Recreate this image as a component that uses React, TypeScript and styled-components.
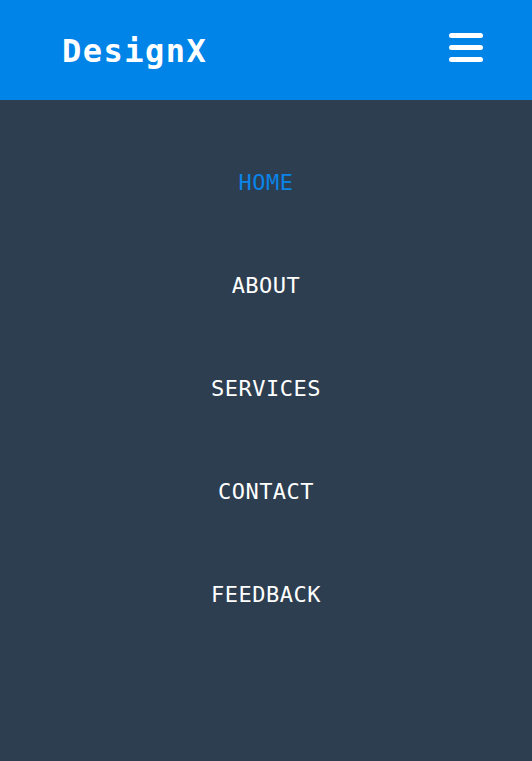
import React from "react";
import styled, { createGlobalStyle } from "styled-components";

const Global = createGlobalStyle`
  html, body { margin: 0; padding: 0; background: #2c3e50; }
  body { font-family: "DejaVu Sans Mono", monospace; }
`;

const Page = styled.div`
  width: 532px;
  height: 761px;
  background: #2c3e50;
  display: flex;
  flex-direction: column;
`;

const Header = styled.header`
  height: 100px;
  background: #0084e8;
  display: flex;
  align-items: center;
  justify-content: space-between;
  padding: 0 49px 0 62px;
  box-sizing: border-box;
`;

const Logo = styled.div`
  color: #ffffff;
  font-size: 32px;
  font-weight: bold;
  letter-spacing: 1.5px;
  padding-top: 2px;
`;

const Burger = styled.button`
  width: 34px;
  height: 29px;
  padding: 0;
  border: none;
  background: transparent;
  display: flex;
  flex-direction: column;
  justify-content: space-between;
  cursor: pointer;
  margin-top: -5px;
`;

const Bar = styled.span`
  display: block;
  height: 5px;
  border-radius: 3px;
  background: #ffffff;
`;

const Nav = styled.nav`
  display: flex;
  flex-direction: column;
  align-items: center;
  padding-top: 62px;
`;

const NavLink = styled.a<{ $active?: boolean }>`
  display: block;
  height: 103px;
  line-height: 42px;
  font-size: 22px;
  letter-spacing: 0.5px;
  color: ${(p) => (p.$active ? "#0a84e8" : "#ffffff")};
  text-decoration: none;
  text-transform: uppercase;
`;

const links = ["Home", "About", "Services", "Contact", "Feedback"];

export default function App() {
  return (
    <>
      <Global />
      <Page>
        <Header>
          <Logo>DesignX</Logo>
          <Burger aria-label="menu">
            <Bar />
            <Bar />
            <Bar />
          </Burger>
        </Header>
        <Nav>
          {links.map((l, i) => (
            <NavLink key={l} href="#" $active={i === 0}>
              {l}
            </NavLink>
          ))}
        </Nav>
      </Page>
    </>
  );
}
